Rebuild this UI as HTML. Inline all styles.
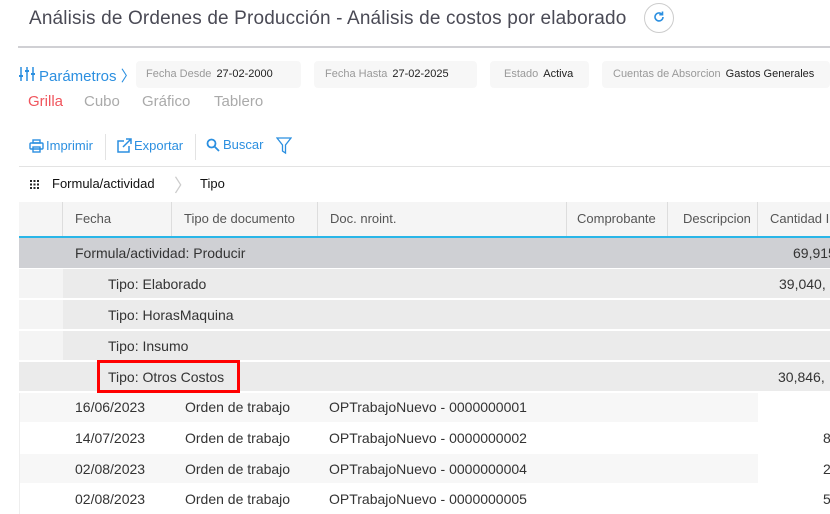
<!DOCTYPE html>
<html><head><meta charset="utf-8"><style>
*{margin:0;padding:0;box-sizing:border-box}
body{width:830px;height:514px;overflow:hidden;background:#fff;font-family:"Liberation Sans",sans-serif;position:relative;color:#333}
.a{position:absolute;white-space:nowrap}
.box{position:absolute;top:61px;height:27px;background:#f7f7f7;border-radius:4px;font-size:11px;line-height:27px;color:#222}
.box span{color:#999;margin-right:5px}
.tb{color:#2b8fe0;font-size:13px}
.cell{position:absolute;font-size:14px;line-height:30px;color:#333;white-space:nowrap}
.hd{position:absolute;top:202px;height:35px;font-size:13px;line-height:34px;color:#555;padding-left:12px;border-right:1px solid #ddd;background:#f5f5f5}
</style></head><body>
<div class="a" style="left:29px;top:8px;font-size:19px;color:#4a4a55;letter-spacing:0.15px">Análisis de Ordenes de Producción - Análisis de costos por elaborado</div>
<div class="a" style="left:644px;top:3px;width:30px;height:30px;border:1px solid #ccc;border-radius:50%;background:#fff"></div>
<svg class="a" style="left:652px;top:10px" width="14" height="14" viewBox="0 0 14 14"><path d="M11 7a4 4 0 1 1-1.2-2.9" fill="none" stroke="#2b8fe0" stroke-width="1.6"/><path d="M10.5 1.5v3.2h-3.2" fill="none" stroke="#2b8fe0" stroke-width="1.6"/></svg>
<div class="a" style="left:18px;top:46px;width:812px;height:2px;background:#d0d0d4"></div>

<svg class="a" style="left:19px;top:66px" width="16" height="16" viewBox="0 0 16 16" stroke="#2b8fe0" stroke-width="1.5"><path d="M2 1v14M8 1v14M14 1v14"/><path d="M0 10h4M6 5h4M12 8h4" stroke-width="2"/></svg>
<div class="a" style="left:39px;top:65px;font-size:15px;color:#2b8fe0">Parámetros 〉</div>
<div class="box" style="left:136px;width:165px;padding-left:10px"><span>Fecha Desde</span>27-02-2000</div>
<div class="box" style="left:314px;width:163px;padding-left:11px"><span>Fecha Hasta</span>27-02-2025</div>
<div class="box" style="left:490px;width:99px;padding-left:14px"><span>Estado</span>Activa</div>
<div class="box" style="left:602px;width:228px;padding-left:11px"><span>Cuentas de Absorcion</span>Gastos Generales</div>

<div class="a" style="left:28px;top:93px;font-size:15px;color:#f0555d">Grilla</div>
<div class="a" style="left:84px;top:93px;font-size:15px;color:#aaa">Cubo</div>
<div class="a" style="left:142px;top:93px;font-size:15px;color:#aaa">Gráfico</div>
<div class="a" style="left:214px;top:93px;font-size:15px;color:#aaa">Tablero</div>

<svg class="a" style="left:29px;top:139px" width="15" height="14" viewBox="0 0 15 14" fill="none" stroke="#2b8fe0" stroke-width="1.4"><rect x="4" y="1" width="7" height="3"/><rect x="1" y="4" width="13" height="6" rx="1"/><rect x="4" y="8" width="7" height="5"/></svg>
<div class="a tb" style="left:46px;top:138px">Imprimir</div>
<div class="a" style="left:105px;top:134px;width:1px;height:26px;background:#e3e3e3"></div>
<svg class="a" style="left:117px;top:138px" width="15" height="15" viewBox="0 0 15 15" fill="none" stroke="#2b8fe0" stroke-width="1.5"><path d="M7 3H1v11h11V8"/><path d="M6 9l8-8M9 1h5v5"/></svg>
<div class="a tb" style="left:134px;top:138px">Exportar</div>
<div class="a" style="left:195px;top:134px;width:1px;height:26px;background:#e3e3e3"></div>
<svg class="a" style="left:206px;top:138px" width="14" height="14" viewBox="0 0 14 14" fill="none" stroke="#2b8fe0" stroke-width="1.8"><circle cx="5.5" cy="5.5" r="4"/><path d="M8.5 8.5L13 13"/></svg>
<div class="a tb" style="left:223px;top:137px">Buscar</div>
<svg class="a" style="left:276px;top:137px" width="16" height="18" viewBox="0 0 16 18" fill="none" stroke="#2b8fe0" stroke-width="1.3"><path d="M1 1h14L9.5 8v8l-3-2V8z"/></svg>
<div class="a" style="left:19px;top:166px;width:811px;height:1px;background:#e3e3e3"></div>

<svg class="a" style="left:30px;top:180px" width="9" height="9" viewBox="0 0 9 9" fill="#222"><rect x="0" y="0" width="2" height="2"/><rect x="3.5" y="0" width="2" height="2"/><rect x="7" y="0" width="2" height="2"/><rect x="0" y="3.5" width="2" height="2"/><rect x="3.5" y="3.5" width="2" height="2"/><rect x="7" y="3.5" width="2" height="2"/><rect x="0" y="7" width="2" height="2"/><rect x="3.5" y="7" width="2" height="2"/><rect x="7" y="7" width="2" height="2"/></svg>
<div class="a" style="left:52px;top:176px;font-size:13px;color:#111">Formula/actividad</div>
<div class="a" style="left:174px;top:172px;font-size:18px;color:#ccc">〉</div>
<div class="a" style="left:200px;top:176px;font-size:13px;color:#111">Tipo</div>

<div class="hd" style="left:19px;width:44px;padding:0"></div>
<div class="hd" style="left:63px;width:109px">Fecha</div>
<div class="hd" style="left:172px;width:146px">Tipo de documento</div>
<div class="hd" style="left:318px;width:249px">Doc. nroint.</div>
<div class="hd" style="left:567px;width:101px;padding-left:10px">Comprobante</div>
<div class="hd" style="left:668px;width:90px;padding-left:15px">Descripcion</div>
<div class="hd" style="left:758px;width:72px;border:0">Cantidad I</div>
<div class="a" style="left:19px;top:236px;width:811px;height:2px;background:#29b6e8"></div>

<div class="a" style="left:19px;top:238px;width:811px;height:30px;background:#cfd0d4"></div>
<div class="cell" style="left:75px;top:238px">Formula/actividad: Producir</div>
<div class="cell" style="left:793px;top:238px">69,915</div>

<div class="a" style="left:19px;top:269px;width:44px;height:29px;background:#f4f4f4"></div>
<div class="a" style="left:63px;top:269px;width:767px;height:29px;background:#ebebeb"></div>
<div class="cell" style="left:108px;top:269px">Tipo: Elaborado</div>
<div class="cell" style="left:779px;top:269px">39,040,</div>

<div class="a" style="left:19px;top:300px;width:44px;height:29px;background:#f4f4f4"></div>
<div class="a" style="left:63px;top:300px;width:767px;height:29px;background:#ebebeb"></div>
<div class="cell" style="left:108px;top:300px">Tipo: HorasMaquina</div>

<div class="a" style="left:19px;top:331px;width:44px;height:29px;background:#f4f4f4"></div>
<div class="a" style="left:63px;top:331px;width:767px;height:29px;background:#ebebeb"></div>
<div class="cell" style="left:108px;top:331px">Tipo: Insumo</div>

<div class="a" style="left:19px;top:362px;width:811px;height:29px;background:#ebebeb"></div>
<div class="cell" style="left:108px;top:362px">Tipo: Otros Costos</div>
<div class="cell" style="left:778px;top:362px">30,846,</div>
<div class="a" style="left:97px;top:360px;width:143px;height:33px;border:3px solid #f00"></div>

<div class="a" style="left:19px;top:393px;width:739px;height:29px;background:#f7f7f7"></div>
<div class="a" style="left:19px;top:454px;width:739px;height:29px;background:#f7f7f7"></div>
<div class="a" style="left:19px;top:393px;width:1px;height:121px;background:#eee"></div>
<div class="cell" style="left:75px;top:392px">16/06/2023</div><div class="cell" style="left:185px;top:392px">Orden de trabajo</div><div class="cell" style="left:329px;top:392px">OPTrabajoNuevo - 0000000001</div>
<div class="cell" style="left:75px;top:423px">14/07/2023</div><div class="cell" style="left:185px;top:423px">Orden de trabajo</div><div class="cell" style="left:329px;top:423px">OPTrabajoNuevo - 0000000002</div><div class="cell" style="left:823px;top:423px">8</div>
<div class="cell" style="left:75px;top:454px">02/08/2023</div><div class="cell" style="left:185px;top:454px">Orden de trabajo</div><div class="cell" style="left:329px;top:454px">OPTrabajoNuevo - 0000000004</div><div class="cell" style="left:823px;top:454px">2</div>
<div class="cell" style="left:75px;top:484px">02/08/2023</div><div class="cell" style="left:185px;top:484px">Orden de trabajo</div><div class="cell" style="left:329px;top:484px">OPTrabajoNuevo - 0000000005</div><div class="cell" style="left:823px;top:484px">5</div>
</body></html>
